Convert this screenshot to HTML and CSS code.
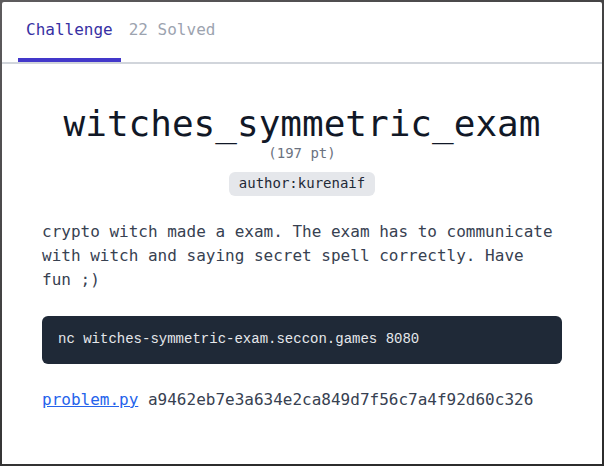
FILE: index.html
```html
<!DOCTYPE html>
<html lang="en">
<head>
<meta charset="utf-8">
<meta name="viewport" content="width=device-width, initial-scale=1">
<title>witches_symmetric_exam</title>
<link rel="stylesheet" href="styles.css">
</head>
<body>
<main class="dialog">
  <div class="tabs" role="tablist">
    <button class="tab tab-active" type="button" role="tab" aria-selected="true">Challenge</button>
    <button class="tab" type="button" role="tab" aria-selected="false">22 Solved</button>
  </div>
  <article class="challenge">
    <header class="heading">
      <h1 class="title">witches_symmetric_exam</h1>
      <p class="points">(197 pt)</p>
      <span class="tag">author:kurenaif</span>
    </header>
    <p class="text">crypto witch made a exam. The exam has to communicate with witch and saying secret spell correctly. Have fun ;)</p>
    <pre class="command"><code>nc witches-symmetric-exam.seccon.games 8080</code></pre>
    <p class="text"><a class="link" href="#">problem.py</a> a9462eb7e3a634e2ca849d7f56c7a4f92d60c326</p>
  </article>
</main>
</body>
</html>
```

FILE: styles.css
```css
* {
  box-sizing: border-box;
  margin: 0;
}

body {
  min-height: 100vh;
  display: flex;
  padding: 2px;
  background: linear-gradient(155deg, #5e5c5e, #2c2c2c 75%);
  color: #374151;
  font: 16px/24px "DejaVu Sans Mono", monospace;
}

.dialog {
  flex: 1;
  min-width: 0;
  border-radius: 2px 2px 0 0;
  background: #fff;
}

.tabs {
  display: flex;
  padding: 0 16px;
  border-bottom: 2px solid #d1d5db;
}

.tab {
  padding: 16px 8px;
  border: 0;
  border-bottom: 4px solid transparent;
  background: none;
  color: #9ca3af;
  font: inherit;
  cursor: pointer;
}

.tab-active {
  border-bottom-color: #4338ca;
  color: #3730a3;
}

.challenge {
  padding: 40px;
}

.heading {
  display: flex;
  flex-direction: column;
  align-items: center;
  margin-bottom: 24px;
}

.title {
  color: #111827;
  font-size: 36px;
  font-weight: 400;
  line-height: 40px;
}

.points {
  margin-bottom: 10px;
  color: #6b7280;
  font-size: 14px;
  line-height: 18px;
}

.tag {
  padding: 2px 10px 4px;
  border-radius: 6px;
  background: #e5e7eb;
  color: #1f2937;
  font-size: 14px;
  line-height: 18px;
}

.command {
  margin: 24px 0;
  padding: 14px 16px 16px;
  border-radius: 6px;
  background: #1f2937;
  color: #e5e7eb;
  font: 14px/18px "Liberation Mono", monospace;
  overflow-x: auto;
}

.command code {
  font: inherit;
}

.link {
  color: #2563eb;
}
```
